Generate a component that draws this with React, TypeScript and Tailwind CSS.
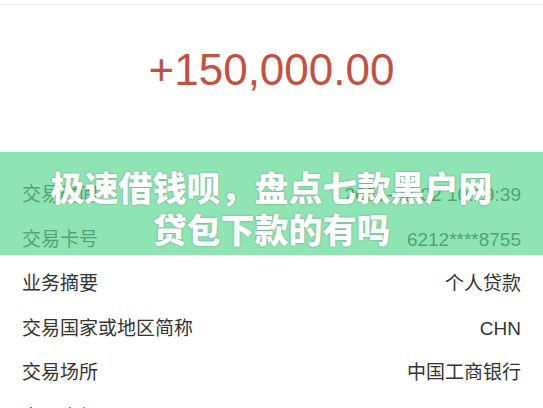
import React from 'react';

const rows = [
  { label: '交易时间', value: '2021-02-02 10:19:39' },
  { label: '交易卡号', value: '6212****8755' },
  { label: '业务摘要', value: '个人贷款' },
  { label: '交易国家或地区简称', value: 'CHN' },
  { label: '交易场所', value: '中国工商银行' },
  { label: '交易金额', value: '150,000.00' },
];

const App = () => {
  return (
    <div className="relative w-[543px] h-[408px] overflow-hidden bg-white font-['Liberation_Sans','Noto_Sans_CJK_SC',sans-serif]">
      <div className="h-[4px]" />
      <div className="h-px bg-[#ececec]" />

      <div className="mt-[43px] h-[44px] text-center text-[44px] leading-[44px] text-[#c4503f]">
        +150,000.00
      </div>

      <div className="mt-[81px]">
        {rows.map((row) => (
          <div key={row.label} className="flex h-[44.5px] items-center justify-between pl-[22px] pr-[22px] text-[19px] text-[#333333]">
            <span>{row.label}</span>
            <span>{row.value}</span>
          </div>
        ))}
      </div>

      <div className="absolute left-0 right-0 top-[152px] flex h-[103px] flex-col items-center justify-center bg-[rgba(91,216,143,0.69)] pt-[9px] font-['Noto_Sans_CJK_SC',sans-serif] text-[34px] font-black leading-[42px] text-white [text-shadow:0_0_2px_rgba(0,0,0,0.35)]">
        <span>极速借钱呗，盘点七款黑户网</span>
        <span>贷包下款的有吗</span>
      </div>
    </div>
  );
};

export default App;
